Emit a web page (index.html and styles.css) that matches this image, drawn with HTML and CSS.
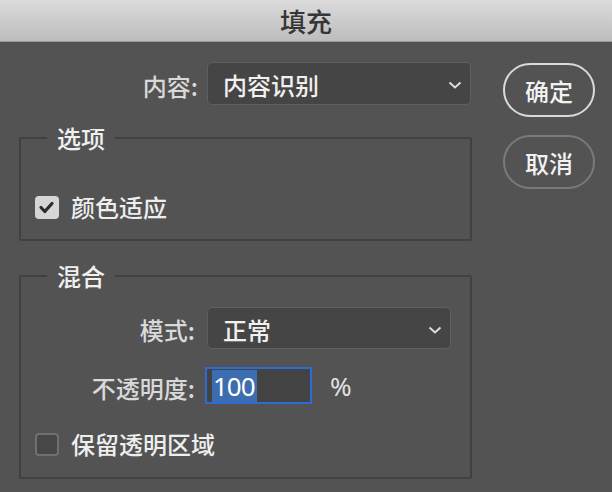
FILE: index.html
```html
<!DOCTYPE html>
<html lang="zh-CN">
<head>
<meta charset="utf-8">
<title>填充</title>
<link rel="stylesheet" href="styles.css">
</head>
<body>
<div class="titlebar">填充</div>
<div class="dialog">
  <div class="main">
    <div class="row row-top">
      <div class="label label-top">内容:</div>
      <div class="select select-top">
        <span class="select-text">内容识别</span>
        <svg class="chev" width="14" height="8" viewBox="0 0 14 8"><path d="M1.5 1.5 L7 6.5 L12.5 1.5" fill="none" stroke="#dcdcdc" stroke-width="2"/></svg>
      </div>
    </div>

    <fieldset class="group group-options">
      <legend>选项</legend>
      <div class="check-row">
        <span class="box checked">
          <svg width="23" height="23" viewBox="0 0 23 23"><path d="M6 11.5 L9.8 15.5 L17 7.5" fill="none" stroke="#2c2c2c" stroke-width="3.2" stroke-linecap="round" stroke-linejoin="round"/></svg>
        </span>
        <span class="check-text">颜色适应</span>
      </div>
    </fieldset>

    <fieldset class="group group-blend">
      <legend>混合</legend>
      <div class="row row-mode">
        <div class="label">模式:</div>
        <div class="select select-mode">
          <span class="select-text">正常</span>
          <svg class="chev" width="14" height="8" viewBox="0 0 14 8"><path d="M1.5 1.5 L7 6.5 L12.5 1.5" fill="none" stroke="#dcdcdc" stroke-width="2"/></svg>
        </div>
      </div>
      <div class="row row-opacity">
        <div class="label">不透明度:</div>
        <div class="input"><span class="sel">100</span></div>
        <span class="pct">%</span>
      </div>
      <div class="check-row check-row-blend">
        <span class="box"></span>
        <span class="check-text">保留透明区域</span>
      </div>
    </fieldset>
  </div>

  <div class="buttons">
    <div class="btn btn-ok">确定</div>
    <div class="btn btn-cancel">取消</div>
  </div>
</div>
</body>
</html>
```
FILE: styles.css
```css
html, body {
  margin: 0;
  padding: 0;
}
body {
  width: 612px;
  height: 492px;
  overflow: hidden;
  background: #535353;
  font-family: "Noto Sans CJK SC", "Noto Sans", sans-serif;
  font-weight: 500;
  color: #eeeeee;
}
.titlebar {
  height: 41px;
  line-height: 41px;
  border-bottom: 1px solid #9a9a9a;
  background: linear-gradient(#dbdbdb, #bdbdbd);
  text-align: center;
  font-size: 26px;
  color: #363636;
}
.dialog {
  display: flex;
  gap: 31px;
  padding: 20px 0 0 19px;
}
.main {
  width: 453px;
}
.row {
  display: flex;
  align-items: center;
}
.row-top {
  height: 43px;
}
.label {
  width: 174px;
  text-align: right;
  font-size: 24px;
  line-height: 28px;
  color: #d9d9d9;
  padding-top: 4px;
}
.label-top {
  width: 179px;
}
.select {
  box-sizing: border-box;
  display: flex;
  align-items: center;
  justify-content: space-between;
  background: #454545;
  border: 1px solid #5f5f5f;
  border-radius: 5px;
  padding: 3px 8px 0 15px;
}
.select-top {
  width: 264px;
  height: 43px;
  margin-left: 9px;
}
.select-mode {
  width: 244px;
  height: 42px;
  margin-left: 12px;
}
.select-text {
  font-size: 24px;
  line-height: 28px;
  color: #f0f0f0;
}
.chev {
  display: block;
}
.group {
  margin: 0;
  padding: 0;
  border: 2px solid #414141;
  border-radius: 2px;
  min-inline-size: 0;
}
.group legend {
  margin-left: 26px;
  padding: 0 10px;
  font-size: 24px;
  line-height: 28px;
  color: #f0f0f0;
}
.group-options {
  margin-top: 19px;
  padding-top: 40px;
  padding-bottom: 17px;
}
.group-blend {
  margin-top: 21px;
  padding-top: 17px;
  padding-bottom: 18px;
}
.check-row {
  display: flex;
  align-items: center;
  height: 30px;
  padding-left: 14px;
  gap: 12px;
}
.check-row-blend {
  margin-top: 25px;
}
.box {
  box-sizing: border-box;
  width: 24px;
  height: 23px;
  border-radius: 4px;
  border: 2px solid #707070;
  background: #474747;
}
.box.checked {
  border: none;
  background: #d6d6d6;
}
.box svg {
  display: block;
}
.check-text {
  font-size: 24px;
  line-height: 30px;
  color: #eeeeee;
}
.row-mode {
  height: 42px;
}
.row-opacity {
  height: 37px;
  margin-top: 18px;
}
.input {
  box-sizing: border-box;
  width: 107px;
  height: 37px;
  margin-left: 10px;
  border: 2px solid #2e6bd3;
  background: #434343;
  padding: 1px 0 0 5px;
}
.sel {
  display: inline-block;
  background: #3d6db1;
  color: #ffffff;
  font-family: "Noto Sans", "Liberation Sans", sans-serif;
  font-weight: 400;
  font-size: 26px;
  letter-spacing: -1px;
  line-height: 32px;
  height: 32px;
  padding: 0 2px 0 1px;
}
.pct {
  margin-left: 18px;
  font-family: "Noto Sans", "Liberation Sans", sans-serif;
  font-weight: 400;
  font-size: 26px;
  color: #e2e2e2;
}
.buttons {
  display: flex;
  flex-direction: column;
  gap: 18px;
  padding-top: 1px;
}
.btn {
  box-sizing: border-box;
  width: 92px;
  height: 54px;
  border-radius: 27px;
  border: 2px solid #dadada;
  display: flex;
  align-items: center;
  justify-content: center;
  font-size: 24px;
  color: #f2f2f2;
}
.btn-cancel {
  border-color: #7a7a7a;
}
```
